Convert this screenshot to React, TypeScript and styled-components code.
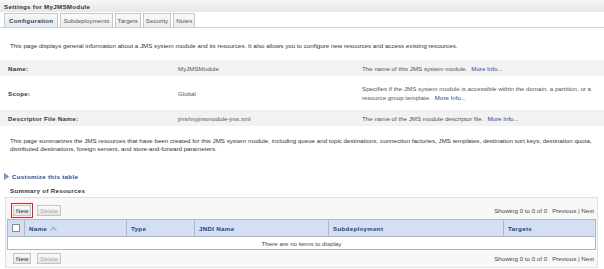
import React from "react";
import styled, { createGlobalStyle } from "styled-components";

const Global = createGlobalStyle`
  html, body { margin: 0; padding: 0; background: #fff; }
  body { font-family: "Liberation Sans", Arial, sans-serif; font-size: 6.2px; color: #333; width: 604px; height: 269px; overflow: hidden; }
  * { box-sizing: border-box; }
`;

const Page = styled.div`
  display: flex;
  flex-direction: column;
  width: 604px;
`;

const TitleBar = styled.div`
  height: 12px;
  display: flex;
  align-items: center;
  padding-left: 4px;
  font-weight: bold;
  letter-spacing: 0.3px;
  color: #333;
  background: linear-gradient(#f7f7f7, #e6e6e6);
`;

const TabBar = styled.div`
  height: 16px;
  display: flex;
  align-items: flex-end;
  gap: 2px;
  padding-left: 4px;
  border-bottom: 1px solid #c9d4de;
`;

const Tab = styled.div<{ $active?: boolean }>`
  height: 14px;
  display: flex;
  align-items: center;
  padding: 0 ${(p) => (p.$active ? 4 : 2)}px;
  border: 1px solid #c8c8c8;
  border-bottom: none;
  font-weight: ${(p) => (p.$active ? "bold" : "normal")};
  letter-spacing: ${(p) => (p.$active ? "0.3px" : "0")};
  color: ${(p) => (p.$active ? "#2f3f55" : "#555")};
  background: ${(p) => (p.$active ? "linear-gradient(#f6f8fa, #e4eaf0)" : "linear-gradient(#fafafa, #ececec)")};
`;

const Content = styled.div`
  display: flex;
  flex-direction: column;
`;

const Intro = styled.p`
  margin: 0;
  padding: 14px 10px 0 10px;
  height: 32px;
  line-height: 8px;
`;

const Row = styled.div<{ $shade?: boolean; $h: number }>`
  height: ${(p) => p.$h}px;
  display: grid;
  grid-template-columns: 170px 184px 1fr;
  align-items: center;
  padding-left: 8px;
  background: ${(p) => (p.$shade ? "#f2f2f2" : "#fff")};
`;

const Label = styled.div`
  font-weight: bold;
  letter-spacing: 0.3px;
  color: #333;
`;

const Value = styled.div`
  color: #555;
`;

const Desc = styled.div`
  color: #555;
  line-height: 9px;
  padding-right: 4px;
`;

const More = styled.span`
  color: #2c4a9c;
  margin-left: 4px;
  white-space: nowrap;
`;

const Summary = styled.p`
  margin: 0;
  padding: 11px 10px 0 10px;
  height: 44px;
  line-height: 8px;
`;

const Customize = styled.div`
  display: flex;
  align-items: center;
  gap: 3px;
  padding-left: 4px;
  height: 12px;
  font-weight: bold;
  letter-spacing: 0.3px;
  color: #2c4a9c;
`;

const SectionTitle = styled.div`
  padding: 2px 0 0 10px;
  height: 15px;
  display: flex;
  align-items: center;
  font-weight: bold;
  letter-spacing: 0.3px;
  color: #333;
`;

const Panel = styled.div`
  margin: 0 6px 0 5px;
  border: 1px solid #e0e0e0;
  background: #f8f8f8;
  padding: 3px 1px 1px 1px;
  display: flex;
  flex-direction: column;
`;

const Controls = styled.div<{ $h: number }>`
  display: flex;
  align-items: center;
  justify-content: space-between;
  height: ${(p) => p.$h}px;
  padding: 0 0 0 4px;
`;

const Buttons = styled.div`
  display: flex;
  align-items: center;
  gap: 4px;
`;

const Highlight = styled.div<{ $on?: boolean }>`
  padding: 1px;
  border: 1px solid ${(p) => (p.$on ? "#d7262b" : "transparent")};
`;

const Button = styled.div<{ $disabled?: boolean }>`
  height: 11px;
  display: flex;
  align-items: center;
  padding: 0 2px;
  border: 1px solid #c4c4c4;
  background: linear-gradient(#fbfbfb, #e3e3e3);
  color: ${(p) => (p.$disabled ? "#aaa" : "#333")};
`;

const Pager = styled.div`
  color: #444;
  padding-right: 2px;
  display: flex;
  gap: 5px;
`;

const PagerLinks = styled.span`
  color: #444;
`;

const Table = styled.div`
  border: 1px solid #a9b7c8;
  display: flex;
  flex-direction: column;
`;

const HeadRow = styled.div`
  display: grid;
  grid-template-columns: 16px 102px 68px 134px 175px 1fr;
  height: 17px;
  background: #d4e0f1;
  border-bottom: 1px solid #a9b7c8;
`;

const HeadCell = styled.div`
  display: flex;
  align-items: center;
  gap: 3px;
  padding-left: 4px;
  font-weight: bold;
  letter-spacing: 0.3px;
  color: #1e3b8f;
  border-left: 1px solid #a9b7c8;
  &:first-child { border-left: none; justify-content: center; padding-left: 0; }
`;

const Check = styled.div`
  width: 8px;
  height: 8px;
  border: 1px solid #8a8a8a;
  background: #fff;
`;

const EmptyRow = styled.div`
  height: 12px;
  display: flex;
  align-items: center;
  justify-content: center;
  background: #fff;
  color: #444;
`;

function SortIcon() {
  return (
    <svg width="7" height="5" viewBox="0 0 7 5">
      <path d="M0.5 4.5 L3.5 1 L6.5 4.5" fill="none" stroke="#8aa0c8" strokeWidth="1" />
      <path d="M2 4.5 L3.5 2.8 L5 4.5" fill="none" stroke="#b0c0dc" strokeWidth="1" />
    </svg>
  );
}

function TriIcon() {
  return (
    <svg width="5" height="7" viewBox="0 0 5 7">
      <path d="M0.5 0.5 L4.5 3.5 L0.5 6.5 Z" fill="#7e96c8" stroke="#5d78b0" strokeWidth="0.6" />
    </svg>
  );
}

function ControlBar({ highlight, h }: { highlight?: boolean; h: number }) {
  return (
    <Controls $h={h}>
      <Buttons>
        <Highlight $on={highlight}>
          <Button>New</Button>
        </Highlight>
        <Button $disabled>Delete</Button>
      </Buttons>
      <Pager>
        <span>Showing 0 to 0 of 0</span>
        <PagerLinks>Previous | Next</PagerLinks>
      </Pager>
    </Controls>
  );
}

export default function App() {
  return (
    <Page>
      <Global />
      <TitleBar>Settings for MyJMSModule</TitleBar>
      <TabBar>
        <Tab $active>Configuration</Tab>
        <Tab>Subdeployments</Tab>
        <Tab>Targets</Tab>
        <Tab>Security</Tab>
        <Tab>Notes</Tab>
      </TabBar>
      <Content>
        <Intro>
          This page displays general information about a JMS system module and its resources. It also allows you to configure new resources and access existing resources.
        </Intro>
        <Row $shade $h={16}>
          <Label>Name:</Label>
          <Value>MyJMSModule</Value>
          <Desc>
            The name of this JMS system module.<More>More Info...</More>
          </Desc>
        </Row>
        <Row $h={34}>
          <Label>Scope:</Label>
          <Value>Global</Value>
          <Desc>
            Specifies if the JMS system module is accessible within the domain, a partition, or a resource group template.<More>More Info...</More>
          </Desc>
        </Row>
        <Row $shade $h={16}>
          <Label>Descriptor File Name:</Label>
          <Value>jms/myjmsmodule-jms.xml</Value>
          <Desc>
            The name of the JMS module descriptor file.<More>More Info...</More>
          </Desc>
        </Row>
        <Summary>
          This page summarizes the JMS resources that have been created for this JMS system module, including queue and topic destinations, connection factories, JMS templates, destination sort keys, destination quota, distributed destinations, foreign servers, and store-and-forward parameters.
        </Summary>
        <Customize>
          <TriIcon />
          Customize this table
        </Customize>
        <SectionTitle>Summary of Resources</SectionTitle>
        <Panel>
          <ControlBar highlight h={18} />
          <Table>
            <HeadRow>
              <HeadCell><Check /></HeadCell>
              <HeadCell>Name <SortIcon /></HeadCell>
              <HeadCell>Type</HeadCell>
              <HeadCell>JNDI Name</HeadCell>
              <HeadCell>Subdeployment</HeadCell>
              <HeadCell>Targets</HeadCell>
            </HeadRow>
            <EmptyRow>There are no items to display</EmptyRow>
          </Table>
          <ControlBar h={16} />
        </Panel>
      </Content>
    </Page>
  );
}
